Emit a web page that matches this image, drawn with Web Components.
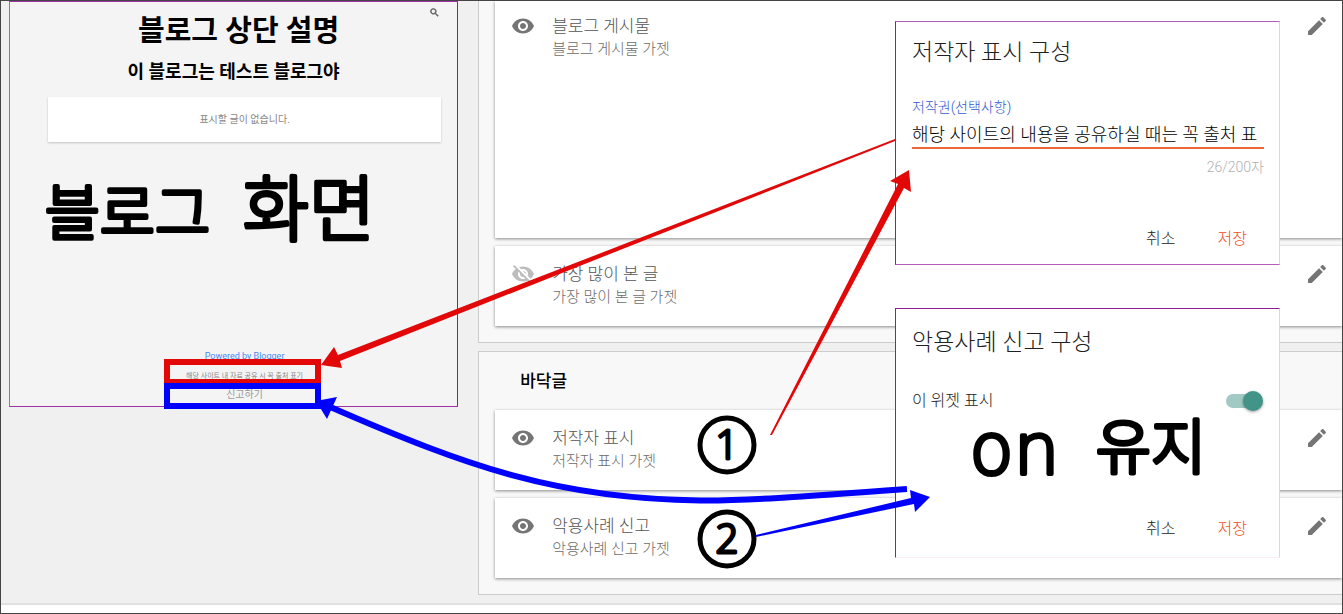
<!DOCTYPE html>
<html lang="ko">
<head>
<meta charset="utf-8">
<meta name="viewport" content="width=device-width, initial-scale=1">
<title>블로그 레이아웃</title>
<style>
    * { box-sizing: border-box; }

    body {
        margin: 0;
        font-family: Roboto, "Noto Sans CJK KR", sans-serif;
        font-weight: 300;
        color: #212121;
    }
</style>
</head>
<body>
<layout-page>
    <blog-preview slot="preview" heading="블로그 상단 설명" description="이 블로그는 테스트 블로그야"></blog-preview>

    <layout-section class="open">
        <gadget-card tall name="블로그 게시물"></gadget-card>
        <gadget-card off name="가장 많이 본 글"></gadget-card>
    </layout-section>
    <layout-section heading="바닥글">
        <gadget-card name="저작자 표시"></gadget-card>
        <gadget-card name="악용사례 신고"></gadget-card>
    </layout-section>

    <config-dialog slot="dialogs" heading="저작자 표시 구성">
        <text-field label="저작권(선택사항)" value="해당 사이트의 내용을 공유하실 때는 꼭 출처 표" counter="26/200자"></text-field>
    </config-dialog>
    <config-dialog slot="dialogs" heading="악용사례 신고 구성" class="second">
        <toggle-row label="이 위젯 표시"></toggle-row>
    </config-dialog>

    <annotation-layer slot="notes"></annotation-layer>
</layout-page>

<script>
'use strict'

const EYE = 'M12 4.5C7 4.5 2.73 7.61 1 12c1.73 4.39 6 7.5 11 7.5s9.27-3.11 11-7.5c-1.73-4.39-6-7.5-11-7.5zM12 17c-2.76 0-5-2.24-5-5s2.24-5 5-5 5 2.24 5 5-2.24 5-5 5zm0-8c-1.66 0-3 1.34-3 3s1.34 3 3 3 3-1.34 3-3-1.34-3-3-3z';
const EYE_OFF = 'M12 7c2.76 0 5 2.24 5 5 0 .65-.13 1.26-.36 1.83l2.92 2.92c1.51-1.26 2.7-2.89 3.43-4.75-1.73-4.39-6-7.5-11-7.5-1.4 0-2.74.25-3.98.7l2.16 2.16C10.74 7.13 11.35 7 12 7zM2 4.27l2.28 2.28.46.46C3.08 8.3 1.78 10.02 1 12c1.73 4.39 6 7.5 11 7.5 1.55 0 3.03-.3 4.38-.84l.42.42L19.73 22 21 20.73 3.27 3 2 4.27zM7.53 9.8l1.55 1.55c-.05.21-.08.43-.08.65 0 1.66 1.34 3 3 3 .22 0 .44-.03.65-.08l1.55 1.55c-.67.33-1.41.53-2.2.53-2.76 0-5-2.24-5-5 0-.79.2-1.53.53-2.2zm4.31-.78l3.15 3.15.02-.16c0-1.66-1.34-3-3-3l-.17.01z';
const PENCIL = 'M3 17.25V21h3.75L17.81 9.94l-3.75-3.75L3 17.25zM20.71 7.04c.39-.39.39-1.02 0-1.41l-2.34-2.34c-.39-.39-1.02-.39-1.41 0l-1.83 1.83 3.75 3.75 1.83-1.83z';
const SEARCH = 'M15.5 14h-.79l-.28-.27C15.41 12.59 16 11.11 16 9.5 16 5.91 13.09 3 9.5 3S3 5.91 3 9.5 5.91 16 9.5 16c1.61 0 3.09-.59 4.23-1.57l.27.28v.79l5 4.99L20.49 19l-4.99-5zm-6 0C7.01 14 5 11.99 5 9.5S7.01 5 9.5 5 14 7.01 14 9.5 11.99 14 9.5 14z';

const BASE = `
    * { box-sizing: border-box; margin: 0; }
    button { border: 0; padding: 0; background: none; font: inherit; color: inherit; cursor: pointer; }
    svg { display: block; fill: currentColor; }
`;

// Common base: opens the shadow root and draws the template
class BaseElement extends HTMLElement {
    connectedCallback() {
        this.attachShadow({ mode: 'open' });
        this.shadowRoot.innerHTML = `<style>${BASE}</style>` + this.render();
    }

    attr(name) {
        return this.getAttribute(name) || '';
    }
}

class LayoutPage extends BaseElement {
    render() {
        return `
        <style>
            :host {
                display: flex;
                flex-direction: column;
                position: relative;
                min-height: 100vh;
                border: 1px solid #444;
                background: #f0f0f0;
                overflow: hidden;
            }
            main {
                flex: 1;
                display: grid;
                grid-template-columns: 13fr 25fr;
                gap: 20px;
                padding: 0 0 8px 8px;
            }
            .sections {
                display: flex;
                flex-direction: column;
                gap: 8px;
            }
            .dialogs {
                position: absolute;
                top: 20px;
                right: 62px;
                width: 385px;
                display: flex;
                flex-direction: column;
                gap: 43px;
            }
            footer {
                height: 10px;
                border-top: 2px solid #e0e0e0;
                background: #fff;
            }
        </style>
        <main>
            <slot name="preview"></slot>
            <div class="sections"><slot></slot></div>
        </main>
        <footer></footer>
        <div class="dialogs"><slot name="dialogs"></slot></div>
        <slot name="notes"></slot>`;
    }
}

class BlogPreview extends BaseElement {
    render() {
        return `
        <style>
            :host {
                align-self: start;
                display: flex;
                flex-direction: column;
                position: relative;
                padding: 9px 16px 4px 38px;
                border: 1px solid #a030a4;
                border-left-color: #b95cc0;
                border-right-color: #8e1c92;
                background: #f4f4f4;
                text-align: center;
                color: #888;
                font-weight: 400;
            }
            header { padding-right: 12px; color: #000; }
            h1 { font-size: 29px; line-height: 40px; }
            header p { margin-top: 6px; padding-right: 10px; font-size: 18px; font-weight: 700; line-height: 30px; }
            button { position: absolute; top: 5px; right: 17px; color: #555; }
            article {
                margin-top: 10px;
                background: #fff;
                box-shadow: 0 1px 2px rgba(0, 0, 0, .2);
                font-size: 10px;
                line-height: 45px;
            }
            footer { margin-top: 205px; font-size: 10px; }
            a { display: block; color: #4a8af4; font-size: 9px; line-height: 18px; text-decoration: none; }
            small { display: block; font-size: 7px; line-height: 22px; }
            a.report { color: #999; font-size: 10px; line-height: 15px; }
        </style>
        <header>
            <h1>${this.attr('heading')}</h1>
            <p>${this.attr('description')}</p>
        </header>
        <button type="button" aria-label="검색">
            <svg width="11" height="11" viewBox="0 0 24 24"><path stroke="currentColor" d="${SEARCH}"/></svg>
        </button>
        <article>표시할 글이 없습니다.</article>
        <footer>
            <a href="#">Powered by Blogger</a>
            <small>해당 사이트 내 자료 공유 시 꼭 출처 표기</small>
            <a class="report" href="#">신고하기</a>
        </footer>`;
    }
}

class LayoutSection extends BaseElement {
    render() {
        const heading = this.attr('heading');
        return `
        <style>
            :host {
                display: flex;
                flex-direction: column;
                gap: 8px;
                padding: 0 0 16px 16px;
                border: 1px solid #ccc;
                border-right: 0;
                background: #f8f8f8;
            }
            /* this one continues above the fold */
            :host(.open) { border-top: 0; }
            h2 {
                margin-bottom: -8px;
                padding-left: 25px;
                font-size: 17px;
                font-weight: 500;
                line-height: 58px;
                color: #000;
            }
        </style>
        ${heading ? `<h2>${heading}</h2>` : ''}
        <slot></slot>`;
    }
}

class GadgetCard extends BaseElement {
    render() {
        const off = this.hasAttribute('off');
        return `
        <style>
            :host {
                display: grid;
                grid-template-columns: 24px 1fr 24px;
                column-gap: 17px;
                align-items: start;
                min-height: 80px;
                padding: 16px 13px 14px 16px;
                background: #fff;
                box-shadow: 0 1px 3px rgba(0, 0, 0, .45);
                color: #555;
            }
            :host([tall]) { min-height: 237px; padding-top: 13px; }
            svg { color: #757575; }
            .off { color: #bdbdbd; }
            h3 { font-size: 17px; font-weight: 300; line-height: 24px; }
            p { font-size: 15px; line-height: 22px; color: #6c6c6c; }
        </style>
        <svg class="${off ? 'off' : ''}" width="24" height="24" viewBox="0 0 24 24"><path d="${off ? EYE_OFF : EYE}"/></svg>
        <div>
            <h3>${this.attr('name')}</h3>
            <p>${this.attr('name')} 가젯</p>
        </div>
        <button type="button" aria-label="${this.attr('name')} 수정">
            <svg width="24" height="24" viewBox="0 0 24 24"><path d="${PENCIL}"/></svg>
        </button>`;
    }
}

class ConfigDialog extends BaseElement {
    render() {
        return `
        <style>
            :host {
                display: flex;
                flex-direction: column;
                min-height: 244px;
                padding: 14px 15px 13px 16px;
                border: 1px solid #b45cba;
                border-left-color: #8e1c92;
                border-right-color: #e6cfec;
                background: #fff;
            }
            :host(.second) {
                min-height: 250px;
                padding-top: 17px;
                padding-bottom: 16px;
                border-top-color: #8e1c92;
                border-bottom-color: #fbeef8;
            }
            h2 { margin-bottom: 27px; font-size: 23px; font-weight: 300; line-height: 34px; }
            .actions {
                display: flex;
                justify-content: flex-end;
                gap: 42px;
                margin-top: auto;
                padding-right: 17px;
                font-size: 16px;
                line-height: 24px;
            }
            .save { color: #f0501e; }
        </style>
        <h2>${this.attr('heading')}</h2>
        <slot></slot>
        <div class="actions">
            <button type="button">취소</button>
            <button type="button" class="save">저장</button>
        </div>`;
    }
}

class TextField extends BaseElement {
    render() {
        return `
        <style>
            :host { display: flex; flex-direction: column; }
            label { font-size: 14px; line-height: 20px; color: #2f5ad0; }
            input {
                width: 100%;
                height: 30px;
                margin-top: 2px;
                padding: 0;
                border: 0;
                border-bottom: 2px solid #ee6639;
                outline: 0;
                background: none;
                font: inherit;
                font-size: 18px;
                color: #000;
            }
            span { margin-top: 8px; font-size: 14px; line-height: 20px; text-align: right; color: #b0b0b0; }
        </style>
        <label for="field">${this.attr('label')}</label>
        <input id="field" type="text" value="${this.attr('value')}">
        <span>${this.attr('counter')}</span>`;
    }
}

class ToggleRow extends BaseElement {
    render() {
        return `
        <style>
            :host { display: flex; align-items: center; justify-content: space-between; }
            label { font-size: 16px; line-height: 28px; }
            input {
                appearance: none;
                position: relative;
                width: 35px;
                height: 14px;
                margin: 0 3px 0 0;
                border-radius: 7px;
                background: #a1cac4;
            }
            input::before {
                content: "";
                position: absolute;
                top: -3px;
                right: -2px;
                width: 20px;
                height: 20px;
                border-radius: 50%;
                background: #429488;
                box-shadow: 0 1px 3px rgba(0, 0, 0, .4);
            }
        </style>
        <label for="toggle">${this.attr('label')}</label>
        <input id="toggle" type="checkbox" role="switch" checked>`;
    }
}

// Marker notes and arrows over the whole page
class AnnotationLayer extends BaseElement {
    render() {
        return `
        <style>
            :host { position: absolute; inset: -1px; pointer-events: none; }
            svg { width: 100%; }
            .red { fill: #e30808; }
            .blue { fill: #0000ff; }
            .box { fill: none; stroke-width: 6px; }
            .ring { fill: none; stroke: #000; stroke-width: 5px; }
            text {
                font-family: "DejaVu Sans", "Noto Sans CJK KR", sans-serif;
                font-weight: 300;
                fill: #000;
                stroke: #000;
                stroke-width: 4px;
                stroke-linejoin: round;
                text-anchor: middle;
            }
            .small { font-size: 60px; }
            .large { font-size: 72px; }
            .digit { font-family: "Open Sans", sans-serif; font-size: 40px; stroke-width: 3px; }
        </style>
        <svg viewBox="0 0 1343 614">
            <rect class="box" stroke="#e30808" x="167" y="362" width="151" height="20"/>
            <rect class="box" stroke="#0000ff" x="167" y="386" width="151" height="20"/>
            <path class="red" d="M895 139L338 355L334 347L321 365L342 368L340 361L895 141z"/>
            <path class="red" d="M770 435L898 184L890 181L909 170L911 192L904 188L772 435z"/>
            <path fill="none" stroke="#0000ff" stroke-width="6" d="M907 489C800 497 740 501 700 500.500C560 499 470 468 328 406"/>
            <path class="blue" d="M316 401L337 397L327 419z"/>
            <path class="blue" d="M756 535L911 498L910 490L930 497L915 512L914 504L756 537z"/>
            <circle class="ring" cx="727" cy="445" r="27"/>
            <circle class="ring" cx="727" cy="539" r="27"/>
            <text class="digit" x="727" y="459">1</text>
            <text class="digit" x="727" y="553">2</text>
            <text y="235"><tspan class="small" x="130">블로그</tspan> <tspan class="large" x="309">화면</tspan></text>
            <text y="474"><tspan class="large" x="1017">on</tspan> <tspan class="small" x="1151" y="469">유지</tspan></text>
        </svg>`;
    }
}

customElements.define('layout-page', LayoutPage);
customElements.define('blog-preview', BlogPreview);
customElements.define('layout-section', LayoutSection);
customElements.define('gadget-card', GadgetCard);
customElements.define('config-dialog', ConfigDialog);
customElements.define('text-field', TextField);
customElements.define('toggle-row', ToggleRow);
customElements.define('annotation-layer', AnnotationLayer);
</script>
</body>
</html>
